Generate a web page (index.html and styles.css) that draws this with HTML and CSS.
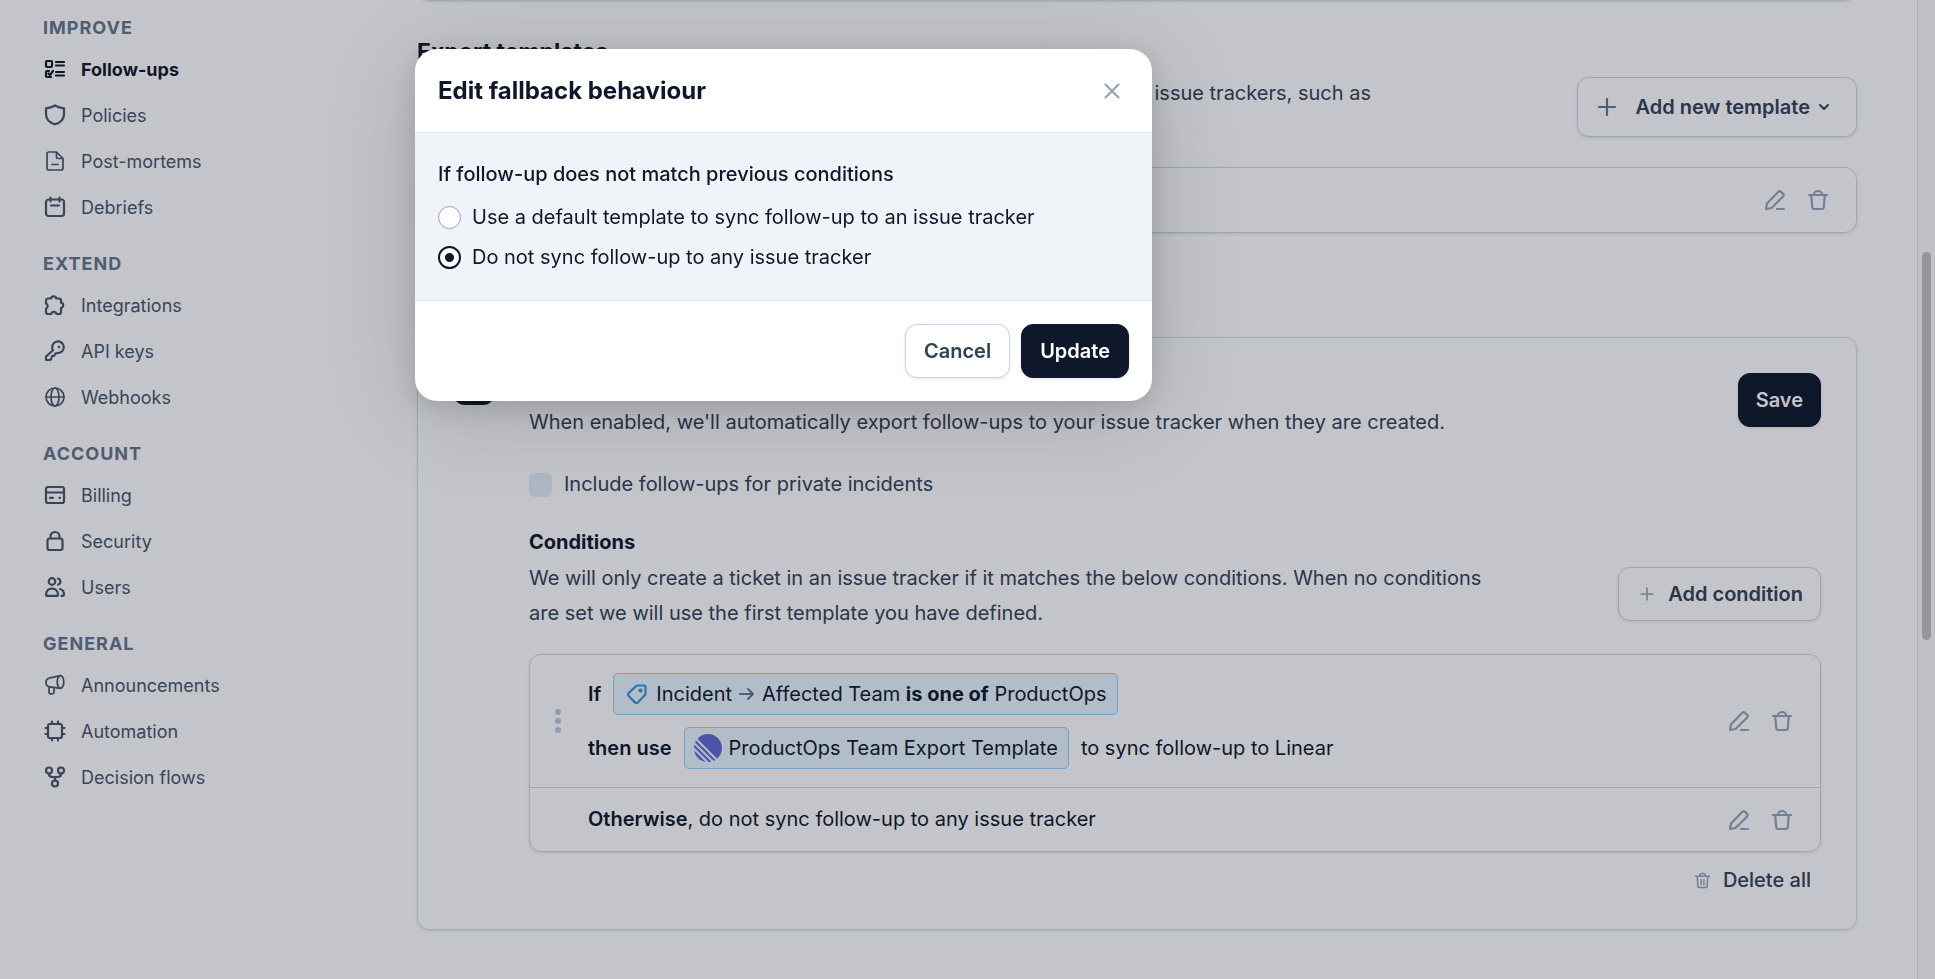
FILE: index.html
```html
<!DOCTYPE html>
<html lang="en">
<head>
    <meta charset="UTF-8">
    <meta name="viewport" content="width=device-width, initial-scale=1.0">
    <title>Follow-ups - Settings</title>
    <link rel="stylesheet" href="styles.css">
</head>
<body>
    <!-- Shared icons -->
    <svg class="icon-defs" aria-hidden="true">
        <symbol id="icon-edit" viewBox="0 0 24 24">
            <path d="M3 21l1-5.6L15.4 3.7a1.8 1.8 0 0 1 2.5 0l2.2 2.2a1.8 1.8 0 0 1 0 2.5L8.6 20 3 21z"/>
            <path d="M14 21h7"/>
        </symbol>
        <symbol id="icon-trash" viewBox="0 0 24 24">
            <path d="M3 7h18M5.2 7l1 12.200a2 2 0 0 0 2 1.800h7.600a2 2 0 0 0 2-1.800L18.800 7M8 6.500a4 3.500 0 0 1 8 0"/>
        </symbol>
        <symbol id="icon-plus" viewBox="0 0 24 24">
            <path d="M12 4v16M4 12h16"/>
        </symbol>
    </svg>

    <div class="page">
        <nav class="sidebar">
            <div class="nav-group">
                <h3>Improve</h3>
                <a href="#" class="active">
                    <svg class="icon" viewBox="0 0 24 24"><rect x="3" y="4" width="6" height="6" rx="1"/><path d="M6 14H4a1 1 0 0 0-1 1v4a1 1 0 0 0 1 1h4M5.500 16.500l1.500 1.500 3-4M13 5h8M13 8.500h8M13 15h8M13 18.500h8"/></svg>
                    Follow-ups
                </a>
                <a href="#">
                    <svg class="icon" viewBox="0 0 24 24"><path d="M12 2.500c2.500 1.500 5.500 2.500 9 2.800V11c0 5-3.600 8.700-9 10.300C6.600 19.700 3 16 3 11V5.300c3.500-.3 6.500-1.300 9-2.800z"/></svg>
                    Policies
                </a>
                <a href="#">
                    <svg class="icon thin" viewBox="0 0 24 24"><path d="M13.500 3H6a2 2 0 0 0-2 2v14a2 2 0 0 0 2 2h12a2 2 0 0 0 2-2V9.500L13.500 3zM13.500 3v5a1.500 1.500 0 0 0 1.500 1.500h5M9 15.500h6"/></svg>
                    Post-mortems
                </a>
                <a href="#">
                    <svg class="icon" viewBox="0 0 24 24"><rect x="3" y="4.500" width="18" height="16.500" rx="2.500"/><path d="M7.500 2.500v4M16.500 2.500v4M8 10.500h8"/></svg>
                    Debriefs
                </a>
            </div>
            <div class="nav-group">
                <h3>Extend</h3>
                <a href="#">
                    <svg class="icon" viewBox="0 0 24 24"><path d="M8 5.500a2.700 2.700 0 0 1 5.300 0H16a2 2 0 0 1 2 2v2.200a2.700 2.700 0 0 1 0 5.300v4a2 2 0 0 1-2 2h-2.500a2.700 2.700 0 0 0-5.300 0H5a2 2 0 0 1-2-2v-3.500a2.700 2.700 0 0 0 0-5V7.500a2 2 0 0 1 2-2h3z"/></svg>
                    Integrations
                </a>
                <a href="#">
                    <svg class="icon" viewBox="0 0 24 24"><path d="M10 11.200A5.800 5.800 0 1 1 14.500 14l-2.300.6-1 2.200-2.400.6-.6 2.600-1 1H3v-3.500l7-6.300z"/><circle class="dot" cx="16" cy="8" r="1.300"/></svg>
                    API keys
                </a>
                <a href="#">
                    <svg class="icon thin" viewBox="0 0 24 24"><circle cx="12" cy="12" r="9"/><ellipse cx="12" cy="12" rx="4" ry="9"/><path d="M3 12h18"/></svg>
                    Webhooks
                </a>
            </div>
            <div class="nav-group">
                <h3>Account</h3>
                <a href="#">
                    <svg class="icon" viewBox="0 0 24 24"><rect x="3" y="4" width="18" height="16" rx="2"/><path d="M3 9.500h18M7 14.800h3M16.500 14.800h.5"/></svg>
                    Billing
                </a>
                <a href="#">
                    <svg class="icon" viewBox="0 0 24 24"><rect x="4.500" y="9.500" width="15" height="11.500" rx="2"/><path d="M7.500 9.500V7.500a4.500 4.500 0 0 1 9 0v2"/></svg>
                    Security
                </a>
                <a href="#">
                    <svg class="icon" viewBox="0 0 24 24"><circle cx="9" cy="6.500" r="3.300"/><path d="M15 3.500a3.200 3.200 0 0 1 0 6.200M3 20c0-4 2.500-6.300 6-6.300s6 2.300 6 6.300c0 .5-.3.800-.8.800H3.800c-.5 0-.8-.3-.8-.8zM17 14c2.500.700 4 2.800 4 5.500 0 .8-.3 1.300-1 1.300h-1.500"/></svg>
                    Users
                </a>
            </div>
            <div class="nav-group">
                <h3>General</h3>
                <a href="#">
                    <svg class="icon thin" viewBox="0 0 24 24"><ellipse cx="17.500" cy="9" rx="3.300" ry="6.300"/><path d="M17.500 2.700L6 5.200C4 5.700 3 7 3 9.500s1.500 4 3.500 4.300l11 1.500M6 14v5a1.800 1.800 0 0 0 1.800 1.800h1.400A1.800 1.800 0 0 0 11 19v-4.500"/></svg>
                    Announcements
                </a>
                <a href="#">
                    <svg class="icon" viewBox="0 0 24 24"><rect x="5" y="5" width="14" height="14" rx="2"/><path d="M9 2.500V5M15 2.500V5M9 19v2.500M15 19v2.500M2.500 9H5M2.500 15H5M19 9h2.500M19 15h2.500"/></svg>
                    Automation
                </a>
                <a href="#">
                    <svg class="icon" viewBox="0 0 24 24"><circle cx="6" cy="5.500" r="3"/><circle cx="18" cy="5.500" r="3"/><circle cx="12" cy="18.500" r="3"/><path d="M6 8.500c0 2 1 3.500 3 3.500h6c2 0 3-1.500 3-3.500M12 12v3.500"/></svg>
                    Decision flows
                </a>
            </div>
        </nav>

        <main class="content">
            <div class="card previous-card"></div>

            <h2>Export templates</h2>
            <div class="section-header">
                <p>issue trackers, such as</p>
                <button type="button" class="btn btn-large">
                    <svg class="icon"><use href="#icon-plus"/></svg>
                    Add new template
                    <svg class="chevron" viewBox="0 0 12 12"><path d="M2 4l4 4 4-4"/></svg>
                </button>
            </div>
            <div class="card template-card">
                <div class="actions">
                    <button type="button" class="icon-btn" aria-label="Edit"><svg class="icon"><use href="#icon-edit"/></svg></button>
                    <button type="button" class="icon-btn" aria-label="Delete"><svg class="icon"><use href="#icon-trash"/></svg></button>
                </div>
            </div>

            <h2>Auto-export</h2>
            <div class="card export-card">
                <div class="export-icon"></div>
                <div class="export-body">
                    <div class="export-header">
                        <div>
                            <h4>Automatic export</h4>
                            <p>When enabled, we'll automatically export follow-ups to your issue tracker when they are created.</p>
                        </div>
                        <button type="button" class="btn btn-primary">Save</button>
                    </div>

                    <label class="check-row">
                        <input type="checkbox" disabled>
                        Include follow-ups for private incidents
                    </label>

                    <h4>Conditions</h4>
                    <div class="conditions-header">
                        <p>We will only create a ticket in an issue tracker if it matches the below conditions. When no conditions are set we will use the first template you have defined.</p>
                        <button type="button" class="btn btn-add">
                            <svg class="icon small-plus"><use href="#icon-plus"/></svg>
                            Add condition
                        </button>
                    </div>

                    <div class="rules">
                        <div class="rule">
                            <svg class="handle" viewBox="0 0 6 24"><circle cx="3" cy="3" r="3"/><circle cx="3" cy="12" r="3"/><circle cx="3" cy="21" r="3"/></svg>
                            <div class="rule-text">
                                <div class="rule-line">
                                    <span class="medium">If</span>
                                    <span class="chip">
                                        <svg class="icon tag" viewBox="0 0 24 24"><path d="M12.500 3.500H19a1.500 1.500 0 0 1 1.500 1.500v6.500a2 2 0 0 1-.6 1.400l-7 7.500a2 2 0 0 1-2.900 0L3.600 14a2 2 0 0 1 0-2.900l7.500-7a2 2 0 0 1 1.400-.6z"/><circle cx="15.500" cy="8.500" r="1"/></svg>
                                        <span>Incident</span>
                                        <svg class="arrow" viewBox="0 0 16 16"><path d="M1 8h13M9 3l5 5-5 5"/></svg>
                                        <span>Affected Team <b>is one of</b> ProductOps</span>
                                    </span>
                                </div>
                                <div class="rule-line">
                                    <span class="medium">then use</span>
                                    <span class="chip">
                                        <svg class="linear-logo" viewBox="0 0 100 100"><path d="M1.225 61.523c-.222-.949.908-1.546 1.597-.857l36.512 36.512c.689.689.092 1.819-.857 1.597C20.051 94.452 5.548 79.949 1.225 61.523zM.002 46.889c-.018.283.089.56.29.761L52.35 99.709c.201.2.478.307.761.289 2.369-.147 4.694-.46 6.962-.926.765-.157 1.03-1.096.478-1.648L2.576 39.449c-.552-.552-1.491-.287-1.648.478-.466 2.268-.778 4.593-.926 6.962zM4.211 29.705c-.166.374-.082.811.208 1.1l64.776 64.776c.289.29.726.374 1.1.208 1.786-.796 3.517-1.693 5.185-2.684.552-.328.638-1.087.184-1.541L8.436 24.337c-.454-.454-1.213-.369-1.541.183-.991 1.668-1.888 3.399-2.684 5.185zM12.659 18.074c-.37-.37-.393-.964-.045-1.354C21.78 6.459 35.111 0 49.952 0 77.593 0 100 22.407 100 50.048c0 14.841-6.459 28.172-16.72 37.338-.39.348-.984.325-1.354-.045L12.659 18.074z"/></svg>
                                        <span>ProductOps Team Export Template</span>
                                    </span>
                                    <span>to sync follow-up to Linear</span>
                                </div>
                            </div>
                            <div class="actions">
                                <button type="button" class="icon-btn" aria-label="Edit condition"><svg class="icon"><use href="#icon-edit"/></svg></button>
                                <button type="button" class="icon-btn" aria-label="Delete condition"><svg class="icon"><use href="#icon-trash"/></svg></button>
                            </div>
                        </div>
                        <div class="rule rule-fallback">
                            <div class="rule-text"><div><span class="medium">Otherwise</span>, do not sync follow-up to any issue tracker</div></div>
                            <div class="actions">
                                <button type="button" class="icon-btn" aria-label="Edit fallback"><svg class="icon"><use href="#icon-edit"/></svg></button>
                                <button type="button" class="icon-btn" aria-label="Delete fallback"><svg class="icon"><use href="#icon-trash"/></svg></button>
                            </div>
                        </div>
                    </div>

                    <button type="button" class="delete-all">
                        <svg class="icon" viewBox="0 0 24 24"><path d="M2 6h20M4.500 6l1 14a2 2 0 0 0 2 2h9a2 2 0 0 0 2-2l1-14M8 5a3 3 0 0 1 3-3h2a3 3 0 0 1 3 3M10 11v7M14 11v7"/></svg>
                        Delete all
                    </button>
                </div>
            </div>
        </main>

        <div class="scroll-track"><div class="scroll-thumb"></div></div>
    </div>

    <!-- Fallback modal -->
    <div class="overlay">
        <form class="modal" role="dialog" aria-labelledby="modalTitle">
            <div class="modal-header">
                <h1 id="modalTitle">Edit fallback behaviour</h1>
                <button type="button" class="icon-btn" aria-label="Close">
                    <svg class="icon" viewBox="0 0 24 24"><path d="M5.500 5.500l13 13M18.500 5.500l-13 13"/></svg>
                </button>
            </div>
            <fieldset class="modal-body">
                <legend>If follow-up does not match previous conditions</legend>
                <label><input type="radio" name="fallback" value="default"> Use a default template to sync follow-up to an issue tracker</label>
                <label><input type="radio" name="fallback" value="none" checked> Do not sync follow-up to any issue tracker</label>
            </fieldset>
            <div class="modal-footer">
                <button type="button" class="btn">Cancel</button>
                <button type="submit" class="btn btn-primary">Update</button>
            </div>
        </form>
    </div>
</body>
</html>
```
FILE: styles.css
```css
* {
    box-sizing: border-box;
}

body {
    margin: 0;
    font-family: Inter, "Liberation Sans", sans-serif;
    font-size: 20px;
    line-height: 35px;
    color: #0f172a;
    background: #fff;
}

h1, h2, h3, h4, p {
    margin: 0;
}

button {
    font-family: inherit;
    font-size: 20px;
    cursor: pointer;
}

.icon-defs {
    position: absolute;
    width: 0;
    height: 0;
}

.icon {
    width: 24px;
    height: 24px;
    flex-shrink: 0;
    fill: none;
    stroke: currentColor;
    stroke-width: 2.2;
    stroke-linecap: round;
    stroke-linejoin: round;
}

.icon.thin {
    stroke-width: 1.7;
}

.icon .dot {
    fill: currentColor;
    stroke: none;
}

.page {
    display: flex;
    min-height: 100vh;
    overflow: hidden;
}

/* Sidebar */
.sidebar {
    width: 417px;
    flex-shrink: 0;
    padding: 16px 43px;
}

.nav-group {
    margin-bottom: 22px;
}

.nav-group h3 {
    margin-bottom: 6px;
    font-size: 18px;
    line-height: 24px;
    font-weight: 700;
    letter-spacing: 1px;
    text-transform: uppercase;
    color: #64748b;
}

.nav-group a {
    display: flex;
    align-items: center;
    gap: 14px;
    height: 46px;
    font-size: 18px;
    color: #475569;
    text-decoration: none;
}

.nav-group a.active {
    font-weight: 700;
    color: #0f172a;
}

/* Main content */
.content {
    flex: 1;
    min-width: 0;
    padding-right: 60px;
}

.content h2 {
    font-size: 23px;
    line-height: 32px;
    font-weight: 700;
}

.content p {
    color: #334155;
}

.card {
    border: 1px solid #d5dfea;
    border-radius: 12px;
    box-shadow: 0 1px 3px rgba(15, 23, 42, 0.12);
}

.previous-card {
    height: 24px;
    margin-top: -23px;
    margin-bottom: 35px;
}

.section-header {
    display: flex;
    justify-content: space-between;
    align-items: flex-start;
    margin: 9px 0 30px;
}

.section-header p {
    width: 954px;
    line-height: 32px;
    text-align: right;
}

.btn {
    display: flex;
    align-items: center;
    justify-content: center;
    gap: 12px;
    height: 54px;
    padding: 0 17px;
    flex-shrink: 0;
    border: 1px solid #cbd5e1;
    border-radius: 12px;
    background: #fff;
    box-shadow: 0 1px 3px rgba(15, 23, 42, 0.12);
    font-weight: 600;
    color: #334155;
}

.btn-primary {
    border-color: #0f172a;
    background: #0f172a;
    color: #fff;
}

.btn-large {
    gap: 8px;
    height: 60px;
    padding: 0 26px 0 17px;
}

.btn-add {
    padding-left: 19px;
}

.btn .icon {
    color: #64748b;
}

.btn-large .icon {
    margin-right: 9px;
}

.btn .small-plus {
    width: 18px;
    height: 18px;
    color: #94a3b8;
}

.chevron {
    width: 12px;
    height: 12px;
    fill: none;
    stroke: currentColor;
    stroke-width: 2;
    stroke-linecap: round;
    stroke-linejoin: round;
}

.actions {
    display: flex;
    gap: 19px;
    margin-left: auto;
}

.icon-btn {
    display: flex;
    padding: 0;
    border: none;
    background: none;
    color: #94a3b8;
}

.template-card {
    display: flex;
    align-items: center;
    height: 66px;
    margin-bottom: 36px;
    padding: 0 26px;
    border-color: #d0d5dc;
}

.export-card {
    display: flex;
    gap: 34px;
    margin-top: 36px;
    padding: 35px 35px 29px;
}

.export-icon {
    width: 42px;
    height: 32px;
    border-radius: 12px;
    background: #0f172a;
}

.export-body {
    flex: 1;
    min-width: 0;
}

.export-body h4 {
    font-size: 20px;
    line-height: 32px;
    font-weight: 700;
}

.export-header {
    display: flex;
    justify-content: space-between;
    align-items: flex-start;
}

.check-row {
    display: flex;
    align-items: center;
    gap: 12px;
    margin: 27px 0 24px;
    color: #334155;
}

.check-row input {
    appearance: none;
    width: 23px;
    height: 24px;
    margin: 0;
    border-radius: 6px;
    background: #e5ecf6;
}

.conditions-header {
    display: flex;
    justify-content: space-between;
    align-items: center;
    margin: 3px 0 23px;
}

.conditions-header p {
    max-width: 980px;
}

.conditions-header .btn {
    margin-bottom: 4px;
}

/* Condition rules */
.rules {
    border: 1px solid #d0d5dc;
    border-radius: 12px;
    box-shadow: 0 1px 3px rgba(15, 23, 42, 0.12);
}

.rule {
    display: flex;
    align-items: center;
    padding: 18px 26px 18px 25px;
}

.rule-fallback {
    padding: 14px 26px 14px 58px;
    border-top: 1px solid #d0d5dc;
}

.handle {
    width: 6px;
    height: 24px;
    margin-right: 27px;
    fill: #bcc7d8;
}

.rule-text {
    display: flex;
    flex-direction: column;
    gap: 12px;
}

.rule-line {
    display: flex;
    align-items: center;
    gap: 12px;
}

.medium {
    font-weight: 600;
}

.chip {
    display: flex;
    align-items: center;
    gap: 7px;
    height: 42px;
    padding: 0 10px 0 9px;
    border: 1px solid #9eccea;
    border-radius: 5px;
    background: #e7f4fd;
}

.chip b {
    font-weight: 700;
}

.chip .tag {
    margin-left: 2px;
    color: #3d95d0;
}

.arrow {
    width: 16px;
    height: 16px;
    fill: none;
    stroke: #64748b;
    stroke-width: 2;
    stroke-linecap: round;
    stroke-linejoin: round;
}

.linear-logo {
    width: 28px;
    height: 28px;
    fill: #5e6ad2;
}

.delete-all {
    display: flex;
    align-items: center;
    gap: 12px;
    height: 40px;
    margin: 8px 0 0 auto;
    padding: 0 10px;
    border: none;
    background: none;
    font-weight: 500;
    color: #334155;
}

.delete-all .icon {
    width: 17px;
    height: 17px;
    color: #94a3b8;
}

/* Scrollbar */
.scroll-track {
    width: 18px;
    padding: 252px 4px 0;
    border-left: 1px solid #e5e5e5;
    background: #fbfbfb;
}

.scroll-thumb {
    width: 9px;
    height: 388px;
    border-radius: 5px;
    background: #c1c1c1;
}

/* Modal */
.overlay {
    position: fixed;
    inset: 0;
    padding: 49px 0 0 415px;
    background: rgba(15, 23, 42, 0.25);
}

.modal {
    width: 737px;
    border-radius: 22px;
    background: #fff;
    box-shadow: 0 12px 90px rgba(0, 0, 0, 0.16), 0 6px 24px rgba(0, 0, 0, 0.12);
}

.modal-header {
    display: flex;
    justify-content: space-between;
    align-items: center;
    height: 83px;
    padding: 0 28px 0 23px;
}

.modal-header h1 {
    font-size: 24px;
    font-weight: 700;
}

.modal-body {
    min-width: 0;
    margin: 0;
    padding: 24px 23px 23px;
    border: solid #e2e8f0;
    border-width: 1px 0;
    background: #f0f4f9;
}

.modal-body legend {
    float: left;
    width: 100%;
    margin-bottom: 5px;
    padding: 0;
    font-weight: 500;
}

.modal-body label {
    display: flex;
    clear: both;
    align-items: center;
    gap: 11px;
    height: 40px;
}

.modal-body input {
    appearance: none;
    width: 23px;
    height: 23px;
    margin: 0;
    border: 1px solid #94a3b8;
    border-radius: 50%;
    background: #fff;
}

.modal-body input:checked {
    border: 2px solid #0f172a;
    background: radial-gradient(circle, #0f172a 4px, #fff 5px);
}

.modal-footer {
    display: flex;
    justify-content: flex-end;
    gap: 11px;
    padding: 23px;
}

.modal-footer .btn {
    padding: 0 18px;
}
```
